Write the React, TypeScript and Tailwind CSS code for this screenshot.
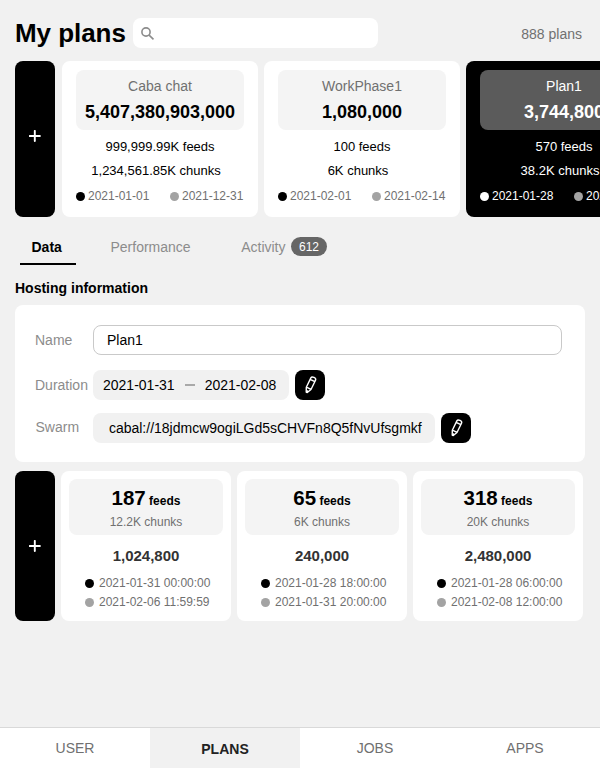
import React from "react";

type Plan = { name: string; total: string; feeds: string; chunks: string; from: string; to: string; active?: boolean };
type Slot = { feeds: string; chunks: string; total: string; from: string; to: string };

const plans: Plan[] = [
  { name: "Caba chat", total: "5,407,380,903,000", feeds: "999,999.99K feeds", chunks: "1,234,561.85K chunks", from: "2021-01-01", to: "2021-12-31" },
  { name: "WorkPhase1", total: "1,080,000", feeds: "100 feeds", chunks: "6K chunks", from: "2021-02-01", to: "2021-02-14" },
  { name: "Plan1", total: "3,744,800", feeds: "570 feeds", chunks: "38.2K chunks", from: "2021-01-28", to: "2021-02-08", active: true },
];

const slots: Slot[] = [
  { feeds: "187", chunks: "12.2K chunks", total: "1,024,800", from: "2021-01-31 00:00:00", to: "2021-02-06 11:59:59" },
  { feeds: "65", chunks: "6K chunks", total: "240,000", from: "2021-01-28 18:00:00", to: "2021-01-31 20:00:00" },
  { feeds: "318", chunks: "20K chunks", total: "2,480,000", from: "2021-01-28 06:00:00", to: "2021-02-08 12:00:00" },
];

function AddButton({ raised = false }: { raised?: boolean }) {
  return (
    <button className={`flex w-10 shrink-0 items-center justify-center rounded-lg bg-black ${raised ? "pb-[7px]" : ""}`} aria-label="Add">
      <svg className="h-3 w-3" viewBox="0 0 12 12" stroke="white" strokeWidth="1.9" strokeLinecap="round">
        <path d="M5.8 .9V11M.7 6H10.9" />
      </svg>
    </button>
  );
}

function EditButton() {
  return (
    <button className="ml-1.5 size-[30px] shrink-0 rounded-lg bg-black" aria-label="Edit">
      <svg className="size-[30px]" viewBox="0 0 30 30" fill="none" stroke="white" strokeWidth="1.4" strokeLinejoin="round" strokeLinecap="round">
        <g transform="translate(15.4 14.8) rotate(26)">
          <path d="M-2.6 4V-6.4Q-2.6-8.2 0-8.2T2.6-6.4V4L.6 8.3H-.6ZM-2.6-4.8H2.6M-2.6 3.8H2.6" />
          <path d="M0 7V8" strokeWidth="1.8" />
        </g>
      </svg>
    </button>
  );
}

function PlanCard({ plan }: { plan: Plan }) {
  const on = plan.active;
  return (
    <div className={`flex w-[196px] shrink-0 flex-col rounded-lg px-3.5 pt-[9px] text-center ${on ? "bg-black text-white" : "bg-white text-black"}`}>
      <div className={`h-[60px] rounded-lg pt-1.5 ${on ? "bg-[#5b5b5b]" : "bg-[#f4f4f4]"}`}>
        <div className={`text-sm leading-5 ${on ? "text-white" : "text-[#707070]"}`}>{plan.name}</div>
        <div className="mt-1.5 text-lg leading-5 font-bold">{plan.total}</div>
      </div>
      <div className="mt-[7px] text-[13px] leading-5">{plan.feeds}</div>
      <div className="mt-1 pr-2 text-[13px] leading-5">{plan.chunks}</div>
      <div className={`mt-[7px] flex items-center text-xs leading-4 ${on ? "text-white" : "text-[#707070]"}`}>
        <span className="flex w-[94px] items-center gap-[3px]">
          <i className={`mt-px size-[9px] rounded-full ${on ? "bg-white" : "bg-black"}`} />
          {plan.from}
        </span>
        <span className="flex items-center gap-[3px]">
          <i className="mt-px size-[9px] rounded-full bg-[#a3a3a3]" />
          {plan.to}
        </span>
      </div>
    </div>
  );
}

function SlotCard({ slot }: { slot: Slot }) {
  return (
    <div className="w-[170px] shrink-0 rounded-lg bg-white px-2 pt-2 text-center">
      <div className="h-14 rounded-lg bg-[#f4f4f4] pt-[7px]">
        <div className="h-6 text-[20.5px] leading-6 font-bold text-black">
          {slot.feeds}
          <span className="text-xs"> feeds</span>
        </div>
        <div className="mt-1 text-xs leading-4 text-[#707070]">{slot.chunks}</div>
      </div>
      <div className="mt-[11px] text-[15px] leading-5 font-bold text-[#333]">{slot.total}</div>
      <div className="mt-[9px] ml-4 flex flex-col gap-[3px] text-xs leading-4 text-[#707070]">
        <span className="flex items-center gap-[5px]">
          <i className="mt-px size-[9px] rounded-full bg-black" />
          {slot.from}
        </span>
        <span className="flex items-center gap-[5px]">
          <i className="mt-px size-[9px] rounded-full bg-[#a3a3a3]" />
          {slot.to}
        </span>
      </div>
    </div>
  );
}

export default function App() {
  return (
    <div className="flex h-screen w-full flex-col overflow-hidden bg-[#f1f1f1] font-['Liberation_Sans',Arial,sans-serif] text-sm text-black">
      <header className="flex pt-[18px] pr-[18px] pl-[15px]">
        <h1 className="w-[118px] text-[26px] leading-[30px] font-bold tracking-[-0.05px] whitespace-nowrap">My plans</h1>
        <div className="h-[30px] w-[245px] rounded-lg bg-white pt-2 pl-[7px]">
          <svg className="size-4" viewBox="0 0 16 16" fill="none" stroke="#8c8c8c" strokeWidth="1.6">
            <circle cx="6" cy="6" r="4.1" />
            <path d="M9.1 9.1L13.5 13.3" />
          </svg>
        </div>
        <span className="mt-1.5 ml-auto leading-5 text-[#707070]">888 plans</span>
      </header>

      <section className="mt-[13px] flex h-[156px] shrink-0 overflow-hidden pl-[15px]">
        <AddButton raised />
        <div className="ml-[7px] flex gap-1.5">
          {plans.map((p) => <PlanCard key={p.name} plan={p} />)}
        </div>
      </section>

      <nav className="mt-5 flex h-7 shrink-0 pl-5 leading-5 text-[#8c8c8c]">
        <span className="h-7 w-14 border-b-2 border-black pl-[11.5px] font-bold text-black">Data</span>
        <span className="ml-[34.5px]">Performance</span>
        <span className="ml-[50.5px]">Activity</span>
        <span className="ml-[5.5px] h-[19px] w-9 rounded-full bg-[#666] text-center text-xs leading-5 text-white">612</span>
      </nav>

      <h2 className="mt-[13px] pl-[15px] leading-5 font-bold">Hosting information</h2>

      <section className="mx-[15px] mt-[7px] flex h-[157px] shrink-0 flex-col rounded-lg bg-white pt-5 pl-5">
        <div className="flex h-[30px] leading-[30px]">
          <span className="w-[58px] text-[#8c8c8c]">Name</span>
          <div className="w-[469px] rounded-lg border border-[#c9c9c9] pl-[13px] leading-7">Plan1</div>
        </div>
        <div className="mt-[15px] flex h-[30px] leading-[30px]">
          <span className="w-[58px] text-[#8c8c8c]">Duration</span>
          <div className="flex w-[196px] items-center rounded-lg bg-[#f1f1f1] pl-2.5">
            <span>2021-01-31</span>
            <i className="mx-2.5 h-0.5 w-2.5 bg-[#a9a9a9]" />
            <span>2021-02-08</span>
          </div>
          <EditButton />
        </div>
        <div className="mt-[13px] flex h-[30px] leading-[30px]">
          <span className="w-[58px] pl-[0.5px] leading-7 text-[#8c8c8c]">Swarm</span>
          <div className="w-[342px] rounded-lg bg-[#f1f1f1] pl-[2.6px] text-center">cabal://18jdmcw9ogiLGd5sCHVFn8Q5fNvUfsgmkf</div>
          <EditButton />
        </div>
      </section>

      <section className="mt-[9px] flex h-[150px] shrink-0 gap-1.5 pl-[15px]">
        <AddButton />
        {slots.map((s) => <SlotCard key={s.total} slot={s} />)}
      </section>

      <footer className="mt-auto grid h-[41px] shrink-0 grid-cols-4 border-t border-[#d9d9d9] bg-white text-center leading-10 text-[#707070]">
        <span>USER</span>
        <span className="bg-[#f1f1f1] pt-px font-bold text-[#222]">PLANS</span>
        <span>JOBS</span>
        <span>APPS</span>
      </footer>
    </div>
  );
}
